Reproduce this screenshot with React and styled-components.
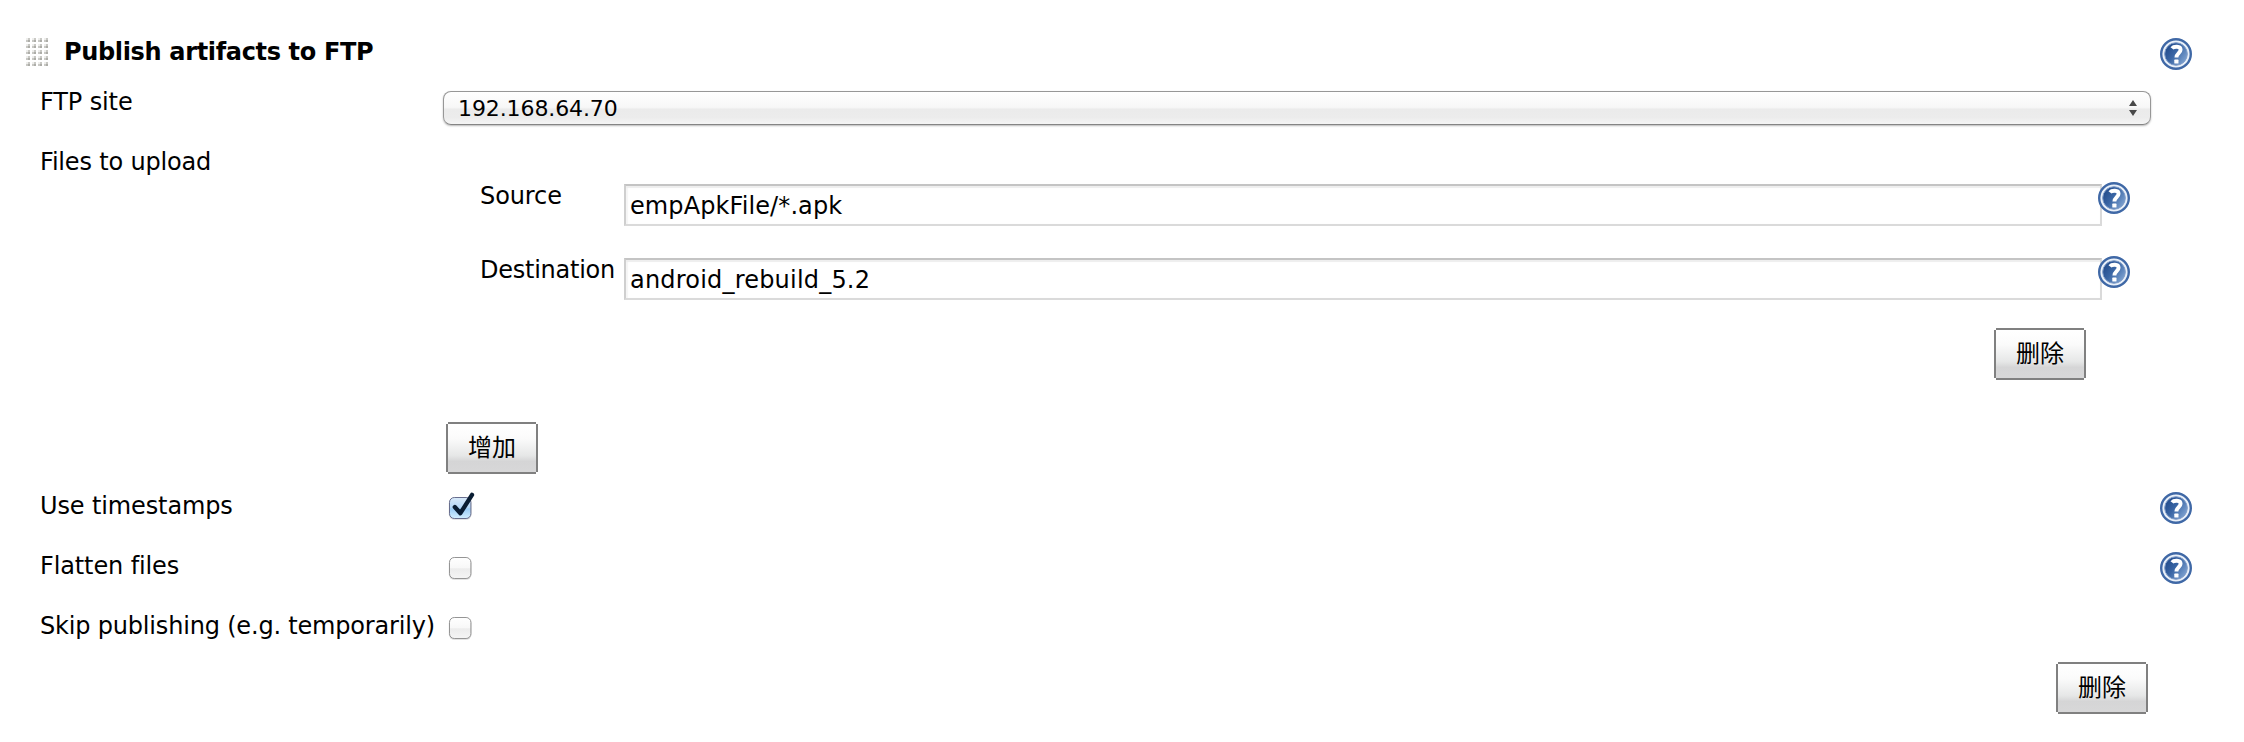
import React, { useState } from 'react';
import styled, { createGlobalStyle, css } from 'styled-components';

const GlobalStyle = createGlobalStyle`
  *, *::before, *::after { box-sizing: border-box; }
  body {
    margin: 0;
    background: #fff;
    color: #000;
    font-family: "DejaVu Sans", "Noto Sans CJK SC", sans-serif;
    font-size: 24px;
  }
`;

const Form = styled.form`
  display: flex;
  flex-direction: column;
  width: 2244px;
  height: 742px;
  padding: 38px 52px 0 40px;
`;

const Header = styled.header`
  display: flex;
  align-items: flex-start;
  height: 50px;
`;

const GripDots = styled.svg`
  flex: none;
  display: block;
  margin: 0 16px 0 -14px;
`;

const Title = styled.h1`
  flex: 1;
  margin: 0;
  font-size: 24px;
  font-weight: bold;
  line-height: 28px;
  letter-spacing: -0.34px;
`;

const Row = styled.div`
  display: grid;
  grid-template-columns: 403px 1fr 32px;
  align-items: start;
  height: ${(p) => p.$height}px;
`;

const Label = styled.label`
  line-height: 28px;
  white-space: nowrap;
  letter-spacing: ${(p) => p.$tracking || 0}px;
`;

const SelectBox = styled.div`
  display: flex;
  align-items: center;
  justify-content: space-between;
  height: 34px;
  margin: 3px 9px 0 0;
  padding: 0 12px 0 14px;
  border: 1px solid #979797;
  border-bottom-color: #858585;
  border-radius: 8px;
  background: linear-gradient(#fff 0, #f7f7f7 48%, #ebebeb 54%, #ececec 80%, #f5f5f5 100%);
  box-shadow: 0 1px 2px rgba(0, 0, 0, 0.28);
  font-size: 22px;
  letter-spacing: -0.1px;
`;

const Entries = styled.div`
  display: flex;
  flex-direction: column;
  align-items: flex-start;
  padding-top: 34px;
`;

const EntryRow = styled.div`
  display: grid;
  grid-template-columns: 144px 1478px 32px;
  align-items: start;
  height: ${(p) => p.$height}px;
  margin-left: 37px;
`;

const TextInput = styled.input`
  width: 100%;
  height: 42px;
  margin-top: 2px;
  padding: 2px 4px 0;
  border: 2px solid #dadada;
  border-top-color: #c4c4c4;
  border-left-color: #cfcfcf;
  border-radius: 0;
  outline: none;
  background: #fff;
  box-shadow: inset 0 2px 1px #eeeeee, inset 2px 0 1px #f6f6f6;
  color: #000;
  font: 24px "DejaVu Sans", sans-serif;
  letter-spacing: ${(p) => p.$tracking}px;
`;

const EntryHelp = styled.span`
  display: block;
  margin-left: -4px;
`;

const Button = styled.button`
  width: 92px;
  height: 52px;
  padding: 0 0 4px;
  border: 0;
  background:
    linear-gradient(#808080, #808080) 2px 0 / 88px 2px no-repeat,
    linear-gradient(#808080, #808080) 2px 100% / 88px 2px no-repeat,
    linear-gradient(#808080, #808080) 0 2px / 2px 48px no-repeat,
    linear-gradient(#808080, #808080) 100% 2px / 2px 48px no-repeat,
    linear-gradient(#fff 4%, #fbfbfb 30%, #e6e7e7 66%, #d5d5d6 78%, #d7d7d8 96%) 2px 2px / 88px 48px no-repeat;
  color: #000;
  font: 24px "Noto Sans CJK SC", sans-serif;
  line-height: 48px;
  ${(p) =>
    p.$place === 'entry' &&
    css`
      align-self: flex-end;
      margin-right: 74px;
    `}
  ${(p) =>
    p.$place === 'list' &&
    css`
      margin: 42px 0 0 3px;
    `}
  ${(p) =>
    p.$place === 'form' &&
    css`
      align-self: flex-end;
      margin-right: 44px;
    `}
`;

const CheckSvg = styled.svg`
  display: block;
  overflow: visible;
  margin: 4px 0 0 5px;
  cursor: default;
`;

const HelpSvg = styled.svg`
  display: block;
`;

function HelpIcon() {
  return (
    <HelpSvg width="32" height="32" viewBox="0 0 32 32" role="img" aria-label="Help">
      <defs>
        <linearGradient id="helpDisc" x1="0" y1="0.15" x2="1" y2="0.85">
          <stop offset="0" stopColor="#1f4787" />
          <stop offset="0.45" stopColor="#3a66a5" />
          <stop offset="1" stopColor="#86a9d6" />
        </linearGradient>
      </defs>
      <circle cx="16" cy="16" r="14.8" fill="#e9f0f9" stroke="#3f68a6" strokeWidth="2.4" />
      <circle cx="16" cy="16" r="11.3" fill="url(#helpDisc)" stroke="#7f9cc8" strokeWidth="1" />
      <path d="M12 10.4C13.6 8.4 20.6 7.6 20.6 11.8C20.6 15 16.4 15.4 16.4 19.6" fill="none" stroke="#fff" strokeWidth="3.9" />
      <rect x="14.3" y="21.6" width="4.2" height="4" rx="0.6" fill="#fff" />
    </HelpSvg>
  );
}

function DragHandle() {
  const dots = [];
  for (let y = 0; y < 5; y += 1) {
    for (let x = 0; x < 4; x += 1) {
      dots.push(
        <g key={`${x}-${y}`} transform={`translate(${x * 6} ${y * 6})`}>
          <rect width="4" height="4" fill="#c9c9c5" />
          <rect width="2" height="2" fill="#eeeeec" />
          <rect x="2" y="2" width="2" height="2" fill="#adada8" />
        </g>
      );
    }
  }
  return (
    <GripDots width="22" height="28" viewBox="0 0 22 28">
      {dots}
    </GripDots>
  );
}

function Checkbox({ checked, onToggle }) {
  const id = checked ? 'boxOn' : 'boxOff';
  return (
    <CheckSvg width="24" height="24" viewBox="0 0 24 24" role="checkbox" aria-checked={checked} onClick={onToggle}>
      <defs>
        <linearGradient id={id} x1="0" y1="0" x2="0" y2="1">
          <stop offset="0" stopColor={checked ? '#d9eafa' : '#ffffff'} />
          <stop offset="0.48" stopColor={checked ? '#b4d7f7' : '#f8f8f8'} />
          <stop offset="0.54" stopColor={checked ? '#9bccf5' : '#ececec'} />
          <stop offset="1" stopColor={checked ? '#d3efff' : '#f5f5f5'} />
        </linearGradient>
      </defs>
      <rect x="0.8" y="1.8" width="22.8" height="22" rx="5.5" fill="#000" opacity="0.14" />
      <rect x="1.5" y="1.5" width="21.4" height="21" rx="4.8" fill={`url(#${id})`} stroke={checked ? '#686e8e' : '#959595'} />
      {checked && (
        <path d="M6.8 11L12.4 17.2L24 -1.2" fill="none" stroke="#0a1d33" strokeWidth="4.3" strokeLinecap="round" strokeLinejoin="round" />
      )}
    </CheckSvg>
  );
}

function SelectArrows() {
  return (
    <svg width="10" height="18" viewBox="0 0 10 18">
      <path d="M1 7L5 1L9 7ZM1 11L5 17L9 11Z" fill="#484848" />
    </svg>
  );
}

function FileEntry({ label, tracking, value, valueTracking, height }) {
  return (
    <EntryRow $height={height}>
      <Label $tracking={tracking}>{label}</Label>
      <TextInput defaultValue={value} $tracking={valueTracking} spellCheck={false} />
      <EntryHelp>
        <HelpIcon />
      </EntryHelp>
    </EntryRow>
  );
}

function CheckRow({ label, tracking, initial, help, height }) {
  const [checked, setChecked] = useState(initial);
  return (
    <Row $height={height}>
      <Label $tracking={tracking}>{label}</Label>
      <Checkbox checked={checked} onToggle={() => setChecked(!checked)} />
      {help && <HelpIcon />}
    </Row>
  );
}

export default function App() {
  return (
    <>
      <GlobalStyle />
      <Form onSubmit={(e) => e.preventDefault()}>
        <Header>
          <DragHandle />
          <Title>Publish artifacts to FTP</Title>
          <HelpIcon />
        </Header>
        <Row $height={60}>
          <Label $tracking={-0.12}>FTP site</Label>
          <SelectBox>
            192.168.64.70
            <SelectArrows />
          </SelectBox>
        </Row>
        <Row $height={344}>
          <Label $tracking={-0.18}>Files to upload</Label>
          <Entries>
            <FileEntry label="Source" tracking={-0.1} value="empApkFile/*.apk" valueTracking={0.1} height={74} />
            <FileEntry label="Destination" tracking={-0.25} value="android_rebuild_5.2" valueTracking={0.2} height={72} />
            <Button type="button" $place="entry">删除</Button>
            <Button type="button" $place="list">增加</Button>
          </Entries>
        </Row>
        <CheckRow label="Use timestamps" tracking={-0.12} initial help height={60} />
        <CheckRow label="Flatten files" tracking={-0.12} initial={false} help height={60} />
        <CheckRow label="Skip publishing (e.g. temporarily)" tracking={-0.185} initial={false} height={50} />
        <Button type="button" $place="form">删除</Button>
      </Form>
    </>
  );
}
